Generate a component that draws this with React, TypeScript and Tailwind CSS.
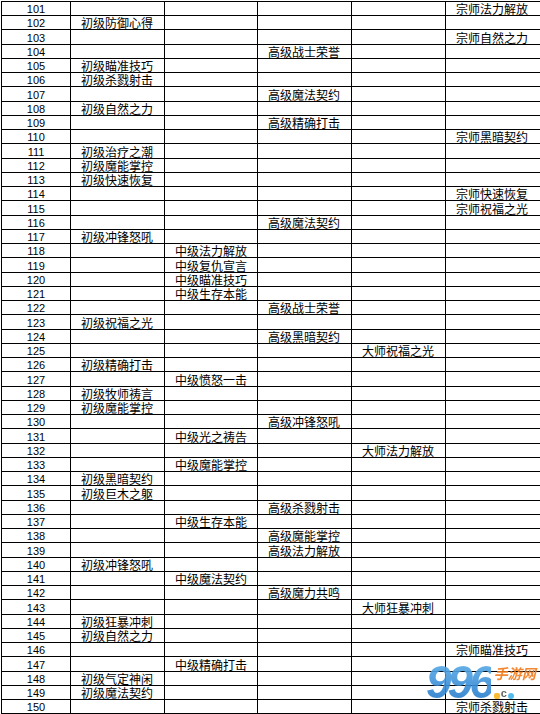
import React from "react";

type Row = { no: number; col: number; text: string };

// col: 1 = 初级, 2 = 中级, 3 = 高级, 4 = 大师, 5 = 宗师
const rows: Row[] = [
  { no: 101, col: 5, text: "宗师法力解放" },
  { no: 102, col: 1, text: "初级防御心得" },
  { no: 103, col: 5, text: "宗师自然之力" },
  { no: 104, col: 3, text: "高级战士荣誉" },
  { no: 105, col: 1, text: "初级瞄准技巧" },
  { no: 106, col: 1, text: "初级杀戮射击" },
  { no: 107, col: 3, text: "高级魔法契约" },
  { no: 108, col: 1, text: "初级自然之力" },
  { no: 109, col: 3, text: "高级精确打击" },
  { no: 110, col: 5, text: "宗师黑暗契约" },
  { no: 111, col: 1, text: "初级治疗之潮" },
  { no: 112, col: 1, text: "初级魔能掌控" },
  { no: 113, col: 1, text: "初级快速恢复" },
  { no: 114, col: 5, text: "宗师快速恢复" },
  { no: 115, col: 5, text: "宗师祝福之光" },
  { no: 116, col: 3, text: "高级魔法契约" },
  { no: 117, col: 1, text: "初级冲锋怒吼" },
  { no: 118, col: 2, text: "中级法力解放" },
  { no: 119, col: 2, text: "中级复仇宣言" },
  { no: 120, col: 2, text: "中级瞄准技巧" },
  { no: 121, col: 2, text: "中级生存本能" },
  { no: 122, col: 3, text: "高级战士荣誉" },
  { no: 123, col: 1, text: "初级祝福之光" },
  { no: 124, col: 3, text: "高级黑暗契约" },
  { no: 125, col: 4, text: "大师祝福之光" },
  { no: 126, col: 1, text: "初级精确打击" },
  { no: 127, col: 2, text: "中级愤怒一击" },
  { no: 128, col: 1, text: "初级牧师祷言" },
  { no: 129, col: 1, text: "初级魔能掌控" },
  { no: 130, col: 3, text: "高级冲锋怒吼" },
  { no: 131, col: 2, text: "中级光之祷告" },
  { no: 132, col: 4, text: "大师法力解放" },
  { no: 133, col: 2, text: "中级魔能掌控" },
  { no: 134, col: 1, text: "初级黑暗契约" },
  { no: 135, col: 1, text: "初级巨木之躯" },
  { no: 136, col: 3, text: "高级杀戮射击" },
  { no: 137, col: 2, text: "中级生存本能" },
  { no: 138, col: 3, text: "高级魔能掌控" },
  { no: 139, col: 3, text: "高级法力解放" },
  { no: 140, col: 1, text: "初级冲锋怒吼" },
  { no: 141, col: 2, text: "中级魔法契约" },
  { no: 142, col: 3, text: "高级魔力共鸣" },
  { no: 143, col: 4, text: "大师狂暴冲刺" },
  { no: 144, col: 1, text: "初级狂暴冲刺" },
  { no: 145, col: 1, text: "初级自然之力" },
  { no: 146, col: 5, text: "宗师瞄准技巧" },
  { no: 147, col: 2, text: "中级精确打击" },
  { no: 148, col: 1, text: "初级气定神闲" },
  { no: 149, col: 1, text: "初级魔法契约" },
  { no: 150, col: 5, text: "宗师杀戮射击" },
];

const cjk = { fontFamily: '"Noto Sans CJK SC", "Noto Sans", sans-serif' };
const latin = { fontFamily: '"Liberation Sans", Arial, sans-serif' };

export default function App() {
  return (
    <div className="relative w-[540px] h-[714px] overflow-hidden bg-white">
      {/* Sheet grid: black background shows through the 1px gaps as cell borders */}
      <div className="ml-px mt-px grid grid-cols-[68px_93px_92px_93px_93px_94px] gap-px bg-black pt-px pl-px pb-px">
        {rows.map((row, i) => {
          const h = i % 4 === 2 ? "h-[14px]" : "h-[13px]";
          return (
            <React.Fragment key={row.no}>
              <div
                className={`${h} bg-white flex items-end justify-center text-[11px] leading-none text-black`}
                style={latin}
              >
                {row.no}
              </div>
              {[1, 2, 3, 4, 5].map((c) => (
                <div
                  key={c}
                  className={`${h} bg-white flex items-end pl-[10px] text-[12px] leading-none text-black whitespace-nowrap`}
                  style={cjk}
                >
                  {row.col === c ? row.text : ""}
                </div>
              ))}
            </React.Fragment>
          );
        })}
      </div>

      {/* 996 watermark */}
      <div className="absolute left-[426px] top-[659px] flex items-start opacity-90 pointer-events-none">
        <span
          className="text-[46px] leading-none font-bold italic tracking-[-4px] bg-linear-to-b from-[#5fb0ea] to-[#1f76c9] bg-clip-text text-transparent"
          style={latin}
        >
          996
        </span>
        <div className="ml-[3px] mt-[7px] flex flex-col items-start">
          <span
            className="text-[14px] leading-none font-bold italic text-[#f27b1c]"
            style={cjk}
          >
            手游网
          </span>
          <div className="mt-[8px] flex items-end gap-[1px]">
            <span className="w-[6px] h-[6px] rounded-[2px] bg-[#f7b51e]" />
            <span className="text-[11px] leading-none font-bold text-[#555]" style={latin}>
              c
            </span>
            <span className="w-[6px] h-[6px] rounded-full bg-[#42b4ea]" />
          </div>
        </div>
      </div>
    </div>
  );
}
